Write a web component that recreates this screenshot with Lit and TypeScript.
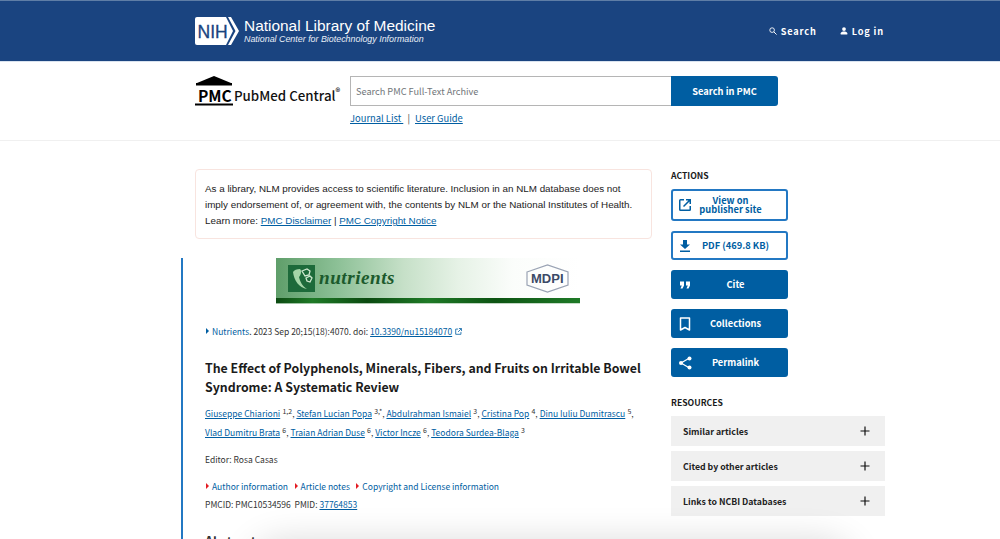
import { LitElement, html, css, svg } from "lit";
import { customElement } from "lit/decorators.js";

const authors1 = [
  ["Giuseppe Chiarioni", "1,2"],
  ["Stefan Lucian Popa", "3,*"],
  ["Abdulrahman Ismaiel", "3"],
  ["Cristina Pop", "4"],
  ["Dinu Iuliu Dumitrascu", "5"],
];
const authors2 = [
  ["Vlad Dumitru Brata", "6"],
  ["Traian Adrian Duse", "6"],
  ["Victor Incze", "6"],
  ["Teodora Surdea-Blaga", "3"],
];

@customElement("app-root")
export class AppRoot extends LitElement {
  static styles = css`
    :host {
      display: block;
      position: relative;
      height: 539px;
      overflow: hidden;
      background: #fff;
      font-family: "Noto Sans CJK SC", "Noto Sans", sans-serif;
      color: #1b1b1b;
    }
    a { color: #005ea2; }
    .nih {
      box-sizing: border-box;
      background: #1a4480;
      border-top: 1px solid #5f7ea6;
      border-bottom: 1px solid #d9e3ef;
      height: 62px;
      display: flex;
      align-items: flex-start;
      padding: 16px 0 0 195px;
    }
    .nih-logo { display: block; width: 45px; height: 28px; }
    .nih-text { margin-left: 4px; color: #fff; font-family: "Liberation Sans", sans-serif; }
    .nih-title { font-size: 15.45px; line-height: 18px; }
    .nih-sub { font-size: 8.9px; font-style: italic; line-height: 11px; margin-top: -1px; color: #e8eef6; }
    .nih-nav {
      margin-left: auto;
      margin-right: 116px;
      margin-top: 8px;
      display: flex;
      gap: 23px;
      color: #fff;
      font-size: 9.2px;
      font-weight: 700;
      letter-spacing: 0.85px;
      line-height: 12px;
    }
    .nih-nav span { display: flex; align-items: center; gap: 4px; }
    .pmc-row {
      height: 79px;
      box-sizing: border-box;
      border-bottom: 1px solid #f0f0f0;
      display: flex;
      padding: 14px 0 0 195px;
    }
    .pmc-logo { display: flex; align-items: flex-end; width: 155px; height: 30px; }
    .pmc-mark { display: block; width: 38px; height: 30px; }
    .pmc-name { font-size: 13.3px; line-height: 15px; margin: 0 0 3px 1px; font-weight: 500; color: #111; white-space: nowrap; }
    .pmc-name sup { font-size: 9.5px; line-height: 0; }
    .search-box { display: flex; height: 30px; width: 428px; }
    .search-input {
      flex: 1;
      box-sizing: border-box;
      border: 1px solid #b5b5b5;
      border-right: 0;
      font-size: 9.2px;
      color: #71767a;
      line-height: 28px;
      padding-left: 5px;
    }
    .search-btn {
      width: 107px;
      background: #005ea2;
      color: #fff;
      font-size: 9.3px;
      font-weight: 700;
      line-height: 30px;
      text-align: center;
      border-radius: 0 3px 3px 0;
    }
    .search-links { font-size: 9.4px; line-height: 14px; margin-top: 5px; color: #444; white-space: pre; }
    .search-links i { font-style: normal; margin: 0 3px 0 2px; }
    .main { display: flex; padding-left: 181px; }
    .left { width: 471px; padding-top: 28px; }
    .notice {
      margin-left: 14px;
      box-sizing: border-box;
      width: 457px;
      height: 70px;
      border: 1px solid #f8e4df;
      border-radius: 4px;
      padding: 11px 9px 0;
      font-family: "Liberation Sans", sans-serif;
      font-size: 9.83px;
      line-height: 16px;
      color: #222;
      white-space: nowrap;
    }
    .article {
      margin-top: 19px;
      border-left: 2px solid #2378c3;
      padding-left: 22px;
      height: 300px;
      font-size: 8.5px;
      color: #333;
    }
    .banner {
      margin-left: 71px;
      width: 304px;
      height: 46px;
      position: relative;
      overflow: hidden;
      background: linear-gradient(90deg, #5f9e6a 0%, #8cc096 20%, #c6e0c8 42%, #e6f2e6 60%, #fbfdfb 78%, #fff 100%);
    }
    .banner-art { display: block; width: 304px; height: 46px; }
    .banner-name {
      position: absolute;
      left: 43px;
      top: 9px;
      font-family: "Liberation Serif", serif;
      font-style: italic;
      font-weight: 700;
      font-size: 19.2px;
      letter-spacing: 0.5px;
      line-height: 22px;
      color: #1c5a2c;
    }
    .banner-mdpi {
      position: absolute;
      left: 255px;
      top: 14px;
      font-family: "Liberation Sans", sans-serif;
      font-weight: 700;
      font-size: 13px;
      line-height: 14px;
      color: #3b4a66;
    }
    .cite { margin-top: 21px; line-height: 12px; white-space: nowrap; display: flex; align-items: center; }
    .cite a.plain, .notes a { text-decoration: none; }
    .tri { display: inline-block; width: 0; height: 0; border-left: 3px solid #005ea2; border-top: 3px solid transparent; border-bottom: 3px solid transparent; margin: 0 3px 0 1px; }
    .tri.red { border-left-color: #e41c23; margin: 0 3px 0 0; }
    .notes .tri.red:first-child { margin-left: 1px; }
    .ext { display: inline-block; width: 7px; height: 7px; margin-left: 3px; }
    h1 {
      margin: 22px 0 0;
      font-size: 12.35px;
      line-height: 19px;
      font-weight: 700;
      color: #1b1b1b;
      white-space: nowrap;
    }
    .authors { margin-top: 7px; line-height: 19px; white-space: nowrap; }
    .authors sup { font-size: 7px; line-height: 0; vertical-align: 3px; margin-left: 2.2px; }
    .editor { margin-top: 11px; line-height: 12px; }
    .notes { margin-top: 15px; line-height: 12px; display: flex; align-items: center; white-space: nowrap; }
    .notes a { margin-right: 6.5px; }
    .ids { margin-top: 6px; line-height: 12px; white-space: pre; }
    h2.abs { margin: 21px 0 0; font-size: 12.4px; line-height: 20px; font-weight: 700; color: #333; }
    .side { margin-left: 19px; width: 214px; padding-top: 28px; }
    .side h3 {
      margin: 0;
      font-size: 8.65px;
      line-height: 12px;
      font-weight: 700;
      color: #1b1b1b;
    }
    .btns { display: flex; flex-direction: column; gap: 10px; margin-top: 8px; width: 117px; }
    .btn {
      box-sizing: border-box;
      height: 29px;
      border: 2px solid #005ea2;
      border-radius: 3px;
      background: #005ea2;
      color: #fff;
      font-size: 9.3px;
      font-weight: 700;
      line-height: 9.4px;
      display: flex;
      align-items: center;
      padding-left: 2.5px;
    }
    .btn.tall { height: 32px; }
    .btn.out { background: #fff; color: #005ea2; border-color: #2378c3; }
    .btn svg { display: block; width: 18px; height: 18px; flex: none; }
    .btn span { flex: 1; text-align: center; padding-right: 8.5px; }
    .btn.out.tall span { padding-right: 18.5px; }
    .res { margin-top: 19px; }
    .acc { display: flex; flex-direction: column; gap: 5px; margin-top: 8px; }
    .acc div {
      height: 30px;
      background: #f0f0f0;
      display: flex;
      align-items: center;
      justify-content: space-between;
      padding: 0 15px 0 12px;
      font-size: 8.75px;
      font-weight: 700;
      color: #222;
    }
    .acc svg { display: block; width: 10px; height: 10px; }
    .fade {
      position: absolute;
      left: 262px;
      top: 552px;
      width: 580px;
      height: 40px;
      border-radius: 20px;
      box-shadow: 0 0 36px 10px rgba(0, 0, 0, 0.16);
      background: rgba(0, 0, 0, 0.16);
      pointer-events: none;
    }
  `;

  private icon(kind: string) {
    const paths: Record<string, unknown> = {
      ext: svg`<path d="M3 4.500A1.500 1.500 0 0 1 4.500 3H8v1.500H4.500v9h9V10H15v3.500a1.500 1.500 0 0 1-1.500 1.500h-9A1.500 1.500 0 0 1 3 13.500z" fill="currentColor"/><path d="M10 3h5v5h-1.500V5.600L8 11 7 10l5.400-5.500H10z" fill="currentColor"/>`,
      dl: svg`<path d="M7 3h4v4.500h3L9 12 4 7.500h3zM4 13.500h10v1.500H4z" fill="currentColor"/>`,
      cite: svg`<path d="M4 5.500h4v4L6.500 12.500h-2l1.300-3H4zM10 5.500h4v4l-1.500 3h-2l1.300-3H10z" fill="currentColor"/>`,
      book: svg`<path d="M4.500 3h9v12l-4.500-2.500L4.500 15z" fill="none" stroke="currentColor" stroke-width="1.500" stroke-linejoin="round"/>`,
      share: svg`<path d="M13.500 4 5 9l8.500 5" fill="none" stroke="currentColor" stroke-width="1.200"/><circle cx="13.500" cy="4.500" r="2" fill="currentColor"/><circle cx="5" cy="9" r="2" fill="currentColor"/><circle cx="13.500" cy="13.500" r="2" fill="currentColor"/>`,
    };
    return html`<svg viewBox="0 0 18 18">${paths[kind]}</svg>`;
  }

  private plus() {
    return html`<svg viewBox="0 0 10 10"><path d="M5 .5v9M.5 5h9" stroke="#111" stroke-width="1.200" fill="none"/></svg>`;
  }

  private authorList(list: string[][], trailing: boolean) {
    return list.map(
      ([n, s], i) =>
        html`<a href="#">${n}</a><sup>${s}</sup>${i < list.length - 1 || trailing ? ", " : ""}`
    );
  }

  render() {
    return html`
      <div class="nih">
        <svg class="nih-logo" viewBox="0 0 45 28">
          <path d="M2 0H31L38 14 31 28H2a2 2 0 0 1-2-2V2a2 2 0 0 1 2-2z" fill="#fff"/>
          <path d="M33 0h3l8 14-8 14h-3l7.500-14z" fill="#fff"/>
          <text x="2.500" y="20.500" font-family="Liberation Sans, sans-serif" font-size="17.500" fill="#1a4480" stroke="#1a4480" stroke-width=".3">NIH</text>
        </svg>
        <div class="nih-text">
          <div class="nih-title">National Library of Medicine</div>
          <div class="nih-sub">National Center for Biotechnology Information</div>
        </div>
        <div class="nih-nav">
          <span>
            <svg width="8" height="8" viewBox="0 0 9 9"><circle cx="3.500" cy="3.500" r="2.600" fill="none" stroke="#fff" stroke-width="1"/><path d="M5.500 5.500 8.500 8.500" stroke="#fff" stroke-width="1.100"/></svg>
            Search
          </span>
          <span>
            <svg width="8" height="8" viewBox="0 0 9 9"><circle cx="4.500" cy="2.300" r="2.100" fill="#fff"/><path d="M.8 8.500V7c0-1.300 2-2 3.700-2s3.700.7 3.700 2v1.500z" fill="#fff"/></svg>
            Log in
          </span>
        </div>
      </div>

      <div class="pmc-row">
        <div class="pmc-logo">
          <svg class="pmc-mark" viewBox="0 0 38 30">
            <path d="M19 0 36 7H2z" fill="#000"/>
            <rect x="1" y="7" width="36" height="2.500" fill="#000"/>
            <text x="3" y="26" font-family="Noto Sans CJK SC, sans-serif" font-weight="700" font-size="15.500" fill="#000">PMC</text>
            <rect x="0" y="27.500" width="38" height="2" fill="#000"/>
          </svg>
          <div class="pmc-name">PubMed Central<sup>®</sup></div>
        </div>
        <div>
          <div class="search-box">
            <div class="search-input">Search PMC Full-Text Archive</div>
            <div class="search-btn">Search in PMC</div>
          </div>
          <div class="search-links"><a href="#">Journal List </a><i> | </i><a href="#">User Guide</a></div>
        </div>
      </div>

      <div class="main">
        <div class="left">
          <div class="notice">
            As a library, NLM provides access to scientific literature. Inclusion in an NLM database does not<br />
            imply endorsement of, or agreement with, the contents by NLM or the National Institutes of Health.<br />
            Learn more: <a href="#">PMC Disclaimer</a> | <a href="#">PMC Copyright Notice</a>
          </div>
          <div class="article">
            <div class="banner">
              <svg class="banner-art" viewBox="0 0 304 46">
                <defs>
                  <linearGradient id="bar">
                    <stop offset="0" stop-color="#0c4a12"/><stop offset=".12" stop-color="#1f7a27"/>
                    <stop offset=".3" stop-color="#0b4a10"/><stop offset=".5" stop-color="#1f7a27"/>
                    <stop offset=".72" stop-color="#0d5413"/><stop offset="1" stop-color="#1f7a27"/>
                  </linearGradient>
                </defs>
                <rect y="40" width="304" height="5.500" fill="url(#bar)"/>
                <rect y="45.500" width="304" height="1" fill="#fff"/>
                <rect x="12" y="7" width="27" height="27" fill="#1d6a3a"/>
                <path d="M17 14c1 8 6 16 14 17-5-3-7-8-8-12 2-2 3-6 1-8-3 0-6 1-7 3z" fill="#a5d6a8"/>
                <path d="M26 13l5-2 3 2-1 4-4 1zM30 20l4-2 2 2-2 4-3-1z" fill="none" stroke="#cfe8cf" stroke-width="1.300"/>
                <path d="M251 14 271.500 7 292 14V27L271.500 34 251 27z" fill="none" stroke="#9aa3b4" stroke-width="1.200"/>
              </svg>
              <div class="banner-name">nutrients</div>
              <div class="banner-mdpi">MDPI</div>
            </div>
            <div class="cite">
              <span class="tri"></span><a class="plain" href="#">Nutrients</a>. 2023 Sep 20;15(18):4070. doi:&nbsp;<a href="#">10.3390/nu15184070</a>
              <svg class="ext" viewBox="0 0 8 8"><path d="M3.500 1.200H.8v6h6V4.500M4.500.6h2.900v2.900M7.200.8 3.500 4.500" fill="none" stroke="#005ea2" stroke-width=".9"/></svg>
            </div>
            <h1>The Effect of Polyphenols, Minerals, Fibers, and Fruits on Irritable Bowel<br />Syndrome: A Systematic Review</h1>
            <div class="authors">
              ${this.authorList(authors1, true)}<br />${this.authorList(authors2, false)}
            </div>
            <div class="editor">Editor: Rosa Casas</div>
            <div class="notes">
              <span class="tri red"></span><a href="#">Author information</a>
              <span class="tri red"></span><a href="#">Article notes</a>
              <span class="tri red"></span><a href="#">Copyright and License information</a>
            </div>
            <div class="ids">PMCID: PMC10534596  PMID: <a href="#">37764853</a></div>
            <h2 class="abs">Abstract</h2>
          </div>
        </div>
        <div class="side">
          <h3>ACTIONS</h3>
          <div class="btns">
            <div class="btn out tall">${this.icon("ext")}<span>View on<br />publisher site</span></div>
            <div class="btn out">${this.icon("dl")}<span>PDF (469.8 KB)</span></div>
            <div class="btn">${this.icon("cite")}<span>Cite</span></div>
            <div class="btn">${this.icon("book")}<span>Collections</span></div>
            <div class="btn">${this.icon("share")}<span>Permalink</span></div>
          </div>
          <div class="res">
            <h3>RESOURCES</h3>
            <div class="acc">
              <div>Similar articles ${this.plus()}</div>
              <div>Cited by other articles ${this.plus()}</div>
              <div>Links to NCBI Databases ${this.plus()}</div>
            </div>
          </div>
        </div>
      </div>
      <div class="fade"></div>
    `;
  }
}
